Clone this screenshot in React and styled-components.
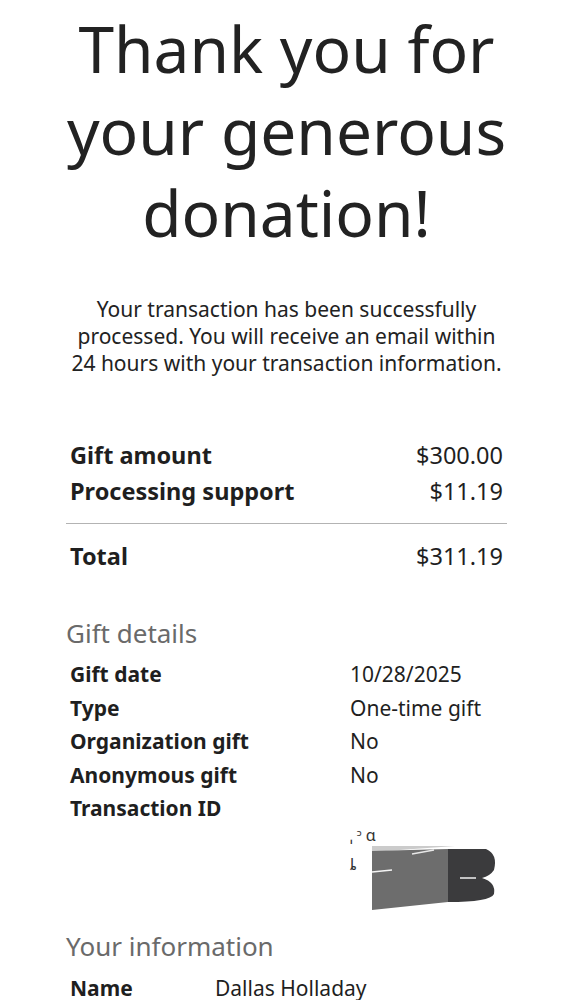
import styled, { createGlobalStyle } from "styled-components";

const Global = createGlobalStyle`
  body {
    margin: 0;
    background: #fff;
    font-family: "Noto Sans", "Open Sans", sans-serif;
    color: #1f1f1f;
  }
`;

const summary = [
  { label: "Gift amount", value: "$300.00" },
  { label: "Processing support", value: "$11.19" },
];

const details = [
  { label: "Gift date", value: "10/28/2025" },
  { label: "Type", value: "One-time gift" },
  { label: "Organization gift", value: "No" },
  { label: "Anonymous gift", value: "No" },
];

export default function App() {
  return (
    <>
      <Global />
      <Page>
        <Title>Thank you for your generous donation!</Title>
        <Intro>
          Your transaction has been successfully processed. You will receive an
          email within 24 hours with your transaction information.
        </Intro>

        <Summary>
          {summary.map((r) => (
            <SumRow key={r.label}>
              <SumLabel>{r.label}</SumLabel>
              <SumValue>{r.value}</SumValue>
            </SumRow>
          ))}
          <Divider />
          <SumRow>
            <SumLabel>Total</SumLabel>
            <SumValue>$311.19</SumValue>
          </SumRow>
        </Summary>

        <Section $top={42}>
          <SectionTitle>Gift details</SectionTitle>
          <Grid $col={280}>
            {details.map((r) => (
              <Pair key={r.label}>
                <Label>{r.label}</Label>
                <Value>{r.value}</Value>
              </Pair>
            ))}
            <Pair>
              <Label>Transaction ID</Label>
              <Redacted>
                <Fragment $top={33}>ˌ ᵓ ɑ</Fragment>
                <Fragment $top={62}>ȴ</Fragment>
                <Blot viewBox="0 0 130 64" aria-hidden="true">
                  <polygon points="22,0 105,0 22,6" fill="#cbcbcb" />
                  <polygon points="22,5 98,3 98,56 22,64" fill="#6d6d6d" />
                  <path d="M98,3 L136,3 Q148,8 144,24 Q140,30 132,32 Q146,36 144,48 Q140,56 98,56 Z" fill="#3b3b3d" />
                  <line x1="22" y1="26" x2="42" y2="24" stroke="#f4f4f4" strokeWidth="1.5" />
                  <line x1="62" y1="8" x2="84" y2="4" stroke="#e8e8e8" strokeWidth="1.5" />
                  <line x1="110" y1="32" x2="126" y2="32" stroke="#f0f0f0" strokeWidth="1.5" />
                </Blot>
              </Redacted>
            </Pair>
          </Grid>
        </Section>

        <Section $top={13}>
          <SectionTitle $gap={9}>Your information</SectionTitle>
          <Grid $col={145}>
            <Pair>
              <Label>Name</Label>
              <Value>Dallas Holladay</Value>
            </Pair>
          </Grid>
        </Section>
      </Page>
    </>
  );
}

const Page = styled.div`
  padding: 8px 66px 40px;
`;

const Title = styled.h1`
  margin: 0;
  text-align: center;
  font-weight: 400;
  font-size: 64px;
  line-height: 82px;
  color: #222;
`;

const Intro = styled.p`
  margin: 42px auto 0;
  max-width: 445px;
  text-align: center;
  font-size: 21px;
  line-height: 27px;
  color: #222;
`;

const Summary = styled.div`
  margin-top: 60px;
`;

const SumRow = styled.div`
  display: flex;
  justify-content: space-between;
  padding: 0 4px;
  font-size: 23.5px;
  line-height: 36px;
`;

const SumLabel = styled.span`
  font-weight: 700;
`;

const SumValue = styled.span`
  font-weight: 400;
`;

const Divider = styled.hr`
  border: none;
  border-top: 1.5px solid #b3b3b3;
  margin: 14px 0 14px;
`;

const Section = styled.section`
  margin-top: ${(p) => p.$top}px;
`;

const SectionTitle = styled.h2`
  margin: 0 0 ${(p) => p.$gap ?? 8}px;
  font-size: 26px;
  font-weight: 400;
  color: #6a6a6a;
  line-height: 34px;
`;

const Grid = styled.div`
  display: grid;
  grid-template-columns: ${(p) => p.$col}px 1fr;
  padding-left: 4px;
  font-size: 21px;
  line-height: 33.5px;
`;

const Pair = styled.div`
  display: contents;
`;

const Label = styled.div`
  font-weight: 700;
`;

const Value = styled.div`
  font-weight: 400;
`;

const Redacted = styled.div`
  position: relative;
  height: 124px;
`;

const Fragment = styled.span`
  position: absolute;
  left: 0;
  top: ${(p) => p.$top}px;
  font-size: 16px;
  line-height: 20px;
  color: #333;
`;

const Blot = styled.svg`
  position: absolute;
  left: 0;
  top: 54px;
  width: 130px;
  height: 64px;
  overflow: visible;
`;
